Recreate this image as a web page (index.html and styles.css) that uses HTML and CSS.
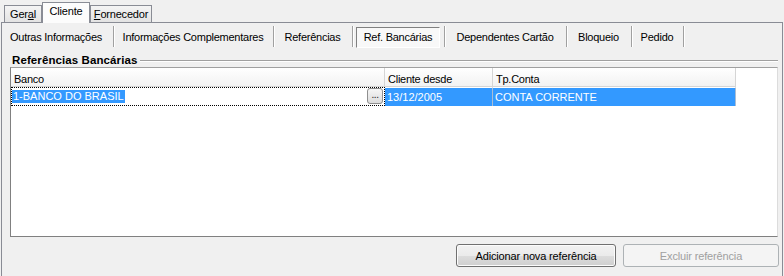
FILE: index.html
```html
<!DOCTYPE html>
<html>

<head>
  <meta charset="utf-8">
  <meta name="viewport" content="width=device-width">
  <title>Cliente - Ref. Bancárias</title>

  <link rel="stylesheet" href="styles.css">
</head>

<body>
  <nav class="tabs">
    <div class="tab tab-geral">Ger<u>a</u>l</div>
    <div class="tab tab-cliente active">Cliente</div>
    <div class="tab tab-fornecedor"><u>F</u>ornecedor</div>
  </nav>

  <main class="page">

    <section class="toolbar">
      <span class="tbtn w-outras">Outras Informações</span><i class="sep"></i>
      <span class="tbtn w-compl">Informações Complementares</span><i class="sep"></i>
      <span class="tbtn w-ref">Referências</span><i class="sep"></i>
      <span class="tbtn w-banc active">Ref. Bancárias</span><i class="sep"></i>
      <span class="tbtn w-dep">Dependentes Cartão</span><i class="sep"></i>
      <span class="tbtn w-bloq">Bloqueio</span><i class="sep"></i>
      <span class="tbtn w-ped">Pedido</span><i class="sep"></i>
    </section>

    <section class="group">
      <div class="group-title">
        <span>Referências Bancárias</span>
        <i class="group-line"></i>
      </div>

      <div class="grid">
        <div class="grid-head">
          <div class="col c-banco">Banco</div>
          <div class="col c-desde">Cliente desde</div>
          <div class="col c-tipo">Tp.Conta</div>
        </div>
        <div class="grid-row">
          <div class="cell c-banco editing">
            <span class="sel-text">1-BANCO DO BRASIL</span>
            <span class="ellipsis">...</span>
          </div>
          <div class="cell c-desde selected">13/12/2005</div>
          <div class="cell c-tipo selected">CONTA CORRENTE</div>
        </div>
      </div>
    </section>

    <section class="actions">
      <button class="btn btn-add">Adicionar nova referência</button>
      <button class="btn btn-del" disabled>Excluir referência</button>
    </section>

  </main>
</body>

</html>
```

FILE: styles.css
```css
* {
  box-sizing: border-box;
}

body {
  margin: 0;
  width: 784px;
  height: 276px;
  overflow: hidden;
  background-color: #f0f0f0;
  color: #000;
  font-family: "Liberation Sans", Arial, sans-serif;
  font-size: 11px;
}

/* top tabs */

.tabs {
  display: flex;
  align-items: flex-end;
  height: 22px;
  padding-left: 4px;
}

.tab {
  height: 17px;
  border: 1px solid #898c95;
  border-bottom: 0;
  background: linear-gradient(#f4f4f4, #e3e3e3);
  text-align: center;
  line-height: 14px;
  padding-top: 1px;
  letter-spacing: -0.2px;
}

.tab u {
  text-decoration: underline;
}

.tab-geral {
  width: 38px;
}

.tab-cliente {
  width: 48px;
}

.tab-fornecedor {
  width: 62px;
}

.tab.active {
  position: relative;
  z-index: 1;
  height: 21px;
  margin-bottom: -1px;
  background: #fcfcfc;
}

/* page */

.page {
  margin: 0 1px;
  height: 260px;
  border: 1px solid #898c95;
  background-color: #f0f0f0;
}

.toolbar {
  display: flex;
  align-items: flex-start;
  height: 25px;
  padding: 3px 0 0 1px;
}

.tbtn {
  height: 22px;
  border: 1px solid transparent;
  text-align: center;
  line-height: 21px;
  white-space: nowrap;
  letter-spacing: -0.25px;
}

.tbtn.active {
  margin-top: 1px;
  height: 21px;
  line-height: 19px;
  border-color: #808080 #fff #fff #808080;
  background-color: #f8f8f8;
}

.w-outras { width: 106px; }
.w-compl { width: 152px; }
.w-ref { width: 71px; }
.w-banc { width: 84px; }
.w-dep { width: 114px; }
.w-bloq { width: 57px; }
.w-ped { width: 44px; }

.sep {
  width: 2px;
  height: 21px;
  margin: 0 2px 0 4px;
  border-left: 1px solid #a0a0a0;
  border-right: 1px solid #fff;
}

/* group box */

.group-title {
  display: flex;
  align-items: center;
  height: 14px;
  margin: 5px 4px 0 10px;
  font-weight: bold;
  font-size: 11.5px;
  letter-spacing: 0.1px;
}

.group-line {
  flex-grow: 1;
  height: 2px;
  margin-left: 3px;
  margin-top: 1px;
  border-top: 1px solid #a0a0a0;
  border-bottom: 1px solid #fff;
}

.grid {
  height: 170px;
  margin: 0 4px 0 8px;
  border: 1px solid;
  border-color: #a0a0a0 #dcdcdc #808080 #808080;
  background-color: #fff;
}

.grid-head,
.grid-row {
  display: flex;
}

.grid-head .col {
  height: 19px;
  padding: 4px 0 0 3px;
  line-height: 14px;
  letter-spacing: -0.25px;
  border-right: 1px solid #d5d5d5;
  border-bottom: 1px solid #d5d5d5;
  background: linear-gradient(#ffffff, #f2f2f2);
}

.c-banco { width: 374px; }
.c-desde { width: 108px; }
.c-tipo { width: 243px; }

.grid-row {
  height: 19px;
}

.cell {
  height: 19px;
  line-height: 17px;
  white-space: nowrap;
}

.cell.editing {
  display: flex;
  justify-content: space-between;
  border: 1px dotted #000;
  padding-right: 1px;
}

.sel-text {
  align-self: center;
  padding: 0 1px;
  line-height: 13px;
  color: #fff;
  background-color: #3399ff;
}

.ellipsis {
  width: 16px;
  height: 16px;
  border: 1px solid #8f8f8f;
  border-radius: 3px;
  background: linear-gradient(#f6f6f6, #dcdcdc);
  color: #222;
  font-size: 10px;
  line-height: 11px;
  text-align: center;
  letter-spacing: -0.5px;
}

.cell.selected {
  padding-left: 2px;
  border-top: 1px solid #fff;
  border-right: 1px solid #a9bdd4;
  line-height: 18px;
  color: #fff;
  background-color: #3399ff;
}

/* buttons */

.actions {
  display: flex;
  justify-content: flex-end;
  gap: 7px;
  margin: 7px 3px 0 0;
}

.btn {
  height: 23px;
  padding: 0;
  border: 1px solid #707070;
  border-radius: 3px;
  font-family: inherit;
  font-size: 11px;
  letter-spacing: -0.15px;
  color: #000;
  background: linear-gradient(#f2f2f2 0%, #ebebeb 50%, #dddddd 51%, #cfcfcf 100%);
  box-shadow: inset 0 0 0 1px #fcfcfc;
}

.btn-add {
  width: 160px;
}

.btn-del {
  width: 156px;
}

.btn:disabled {
  border-color: #adb2b5;
  background: #f4f4f4;
  color: #a0a0a0;
  box-shadow: none;
}
```
